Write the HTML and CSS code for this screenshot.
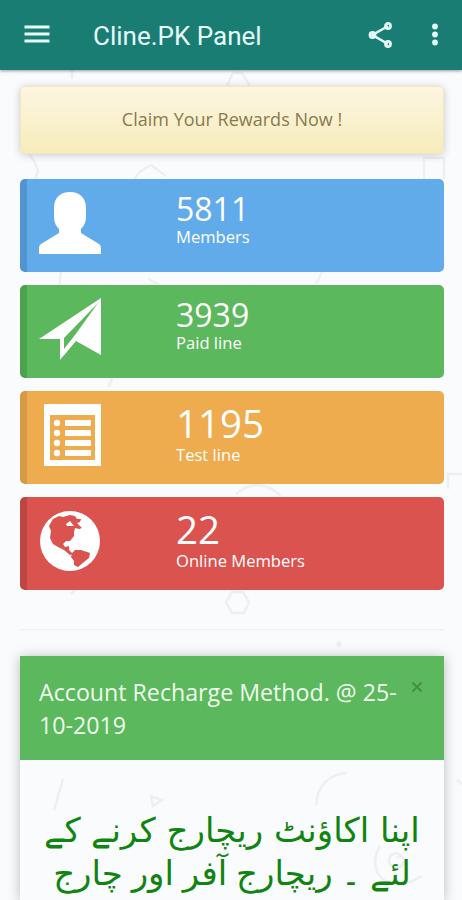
FILE: index.html
```html
<!DOCTYPE html>
<html lang="en">
<head>
  <meta charset="UTF-8" />
  <meta name="viewport" content="width=device-width, initial-scale=1.0" />
  <title>Cline.PK Panel</title>
  <link rel="stylesheet" href="styles.css">
</head>
<body>
  <svg class="doodles" width="462" height="900" viewBox="0 0 462 900">
    <path d="M72 70v9M227 86l6-13h9l8 13M29 155c5 4 7 9 9 16l-3 9M135 179q2-7 16-14l15 11M424 179v-21h20v21M61 272l-2 14M322 272l-6 12M148 279l12 6M112 378l-3 9M448 489v-15h14M236 494q22-19 45 2" />
    <path d="M232 592h11l6 10-5 11h-12l-6-11zM71 594l4-4" />
    <circle cx="339" cy="644" r="1.5" />
    <path d="M63 779l-9 31M151 796l11 4-9 6zM316 805c1-19 13-31 31-32M401 857c-3-7-12-3-12 4s10 9 14 3-2-10-6-6M380 846c-12 22 1 38 17 38 11 0 17-3 24-8M457 780l5 4M235 884l2-1" />
  </svg>

  <header class="topbar">
    <svg class="menu-icon" width="26" height="20" viewBox="0 0 26 20">
      <path d="M.5 3h25M.5 10h25M.5 17h25" />
    </svg>
    <h1>Cline.PK Panel</h1>
    <svg class="share-icon" width="26" height="28" viewBox="0 0 26 28">
      <path d="M20 5L4.500 14 20 23" />
      <circle cx="20" cy="5" r="2.600" />
      <circle cx="4.500" cy="14" r="2.600" />
      <circle cx="20" cy="23" r="2.600" />
    </svg>
    <svg class="more-icon" width="8" height="24" viewBox="0 0 8 24">
      <circle cx="4" cy="3.500" r="2.900" />
      <circle cx="4" cy="11.500" r="2.900" />
      <circle cx="4" cy="19.500" r="2.900" />
    </svg>
  </header>

  <main>
    <div class="rewards">Claim Your Rewards Now !</div>

    <div class="stats">
      <div class="stat blue">
        <svg class="stat-icon" width="64" height="64" viewBox="0 0 64 64">
          <path d="M32 1c10 0 16 6 16 16v8c0 6-2 10-5 13v4l18 11q2 1 2 4v6H1v-6q0-3 2-4l18-11v-4c-3-3-5-7-5-13v-8C16 7 22 1 32 1z" />
        </svg>
        <div class="stat-text">
          <div class="number">5811</div>
          <div class="label">Members</div>
        </div>
      </div>
      <div class="stat green">
        <svg class="stat-icon" width="64" height="64" viewBox="0 0 64 64">
          <path d="M63 1v57L38 44 22 63V42H1z" />
          <path class="cut" d="M60 6L26 41v11l11-14z" />
        </svg>
        <div class="stat-text">
          <div class="number">3939</div>
          <div class="label">Paid line</div>
        </div>
      </div>
      <div class="stat orange">
        <svg class="stat-icon" width="64" height="64" viewBox="0 0 64 64">
          <path d="M6 1h57v62H6z" />
          <path class="cut" d="M12 12h45v45H12z" />
          <path d="M28 17h24q1 0 1 1v4q0 1-1 1H28q-1 0-1-1v-4q0-1 1-1zM28 27h24q1 0 1 1v4q0 1-1 1H28q-1 0-1-1v-4q0-1 1-1zM28 37h24q1 0 1 1v4q0 1-1 1H28q-1 0-1-1v-4q0-1 1-1zM28 47h24q1 0 1 1v4q0 1-1 1H28q-1 0-1-1v-4q0-1 1-1z" />
          <circle cx="19" cy="20" r="3.200" />
          <circle cx="19" cy="30" r="3.200" />
          <circle cx="19" cy="40" r="3.200" />
          <circle cx="19" cy="50" r="3.200" />
        </svg>
        <div class="stat-text">
          <div class="number big">1195</div>
          <div class="label">Test line</div>
        </div>
      </div>
      <div class="stat red">
        <svg class="stat-icon" width="64" height="64" viewBox="0 0 64 64">
          <circle cx="32" cy="32" r="30" />
          <path class="cut" d="M15 10l6-3 4 1 7-2 5 1 2 3 4 0-1 3-3 1 5 5-3 1-4-1-1 4v4l-4 5-4 0-3 3 2 3 4-1v4l4 4-3 1-6-5-6-3-5-3-3-6 1-7-2-5z" />
          <path class="cut" d="M34 44l3-3h6l9 3-1 5-5 4-6 5-4-2 0-4-3-4z" />
          <path d="M28 15l4-3 4 5-7 0z" />
        </svg>
        <div class="stat-text">
          <div class="number big">22</div>
          <div class="label">Online Members</div>
        </div>
      </div>
    </div>

    <hr>

    <section class="notice">
      <div class="notice-head">
        <h2>Account Recharge Method. @ 25-10-2019</h2>
        <svg class="close-icon" width="12" height="12" viewBox="0 0 12 12">
          <path d="M1.500 1.500l9 9M10.500 1.500l-9 9" />
        </svg>
      </div>
      <div class="notice-body" lang="ur" dir="rtl">
        <div>اپنا اکاؤنٹ ریچارج کرنے کے</div>
        <div class="tight">لئے ۔ ریچارج آفر اور چارج</div>
      </div>
    </section>
  </main>
</body>
</html>
```
FILE: styles.css
```css
body {
  position: relative;
  height: 900px;
  margin: 0;
  overflow: hidden;
  background-color: #fafbfd;
  font-family: "Open Sans", sans-serif;
}
.doodles {
  position: absolute;
  top: 0;
  left: 0;
  z-index: -1;
  fill: none;
  stroke: #eeeff1;
  stroke-width: 2.5;
}
.topbar {
  display: flex;
  align-items: center;
  box-sizing: border-box;
  height: 70px;
  padding: 0 23px 0 24px;
  background-color: #1a7d74;
  box-shadow: 0 1px 3px rgba(0, 0, 0, 0.4);
}
.topbar h1 {
  flex: 1;
  margin: 1px 0 0 43px;
  color: #e6fbf8;
  font-family: Roboto, sans-serif;
  font-size: 26px;
  font-weight: 400;
}
.topbar svg {
  fill: none;
  stroke: #e6fbf8;
  stroke-width: 2.6;
}
.topbar .menu-icon {
  margin-top: -2px;
  stroke-width: 3.2;
}
.share-icon {
  margin-right: 37px;
}
.topbar .more-icon {
  fill: #e6fbf8;
  stroke: none;
}
main {
  padding: 16px 18px 0 20px;
}
.rewards {
  box-sizing: border-box;
  height: 68px;
  border: 1px solid #f1e7bc;
  border-radius: 5px;
  background: linear-gradient(#fcf6e2, #f7ecba);
  box-shadow: 0 1px 9px rgba(0, 0, 0, 0.2);
  color: #8a7950;
  font-size: 18px;
  line-height: 65px;
  text-align: center;
}
.stats {
  display: grid;
  gap: 13px;
  margin-top: 25px;
}
.stat {
  display: flex;
  box-sizing: border-box;
  height: 93px;
  padding: 12px 0 0 11px;
  border-left: 7px solid;
  border-radius: 5px;
}
.blue {
  background-color: #62abea;
  border-color: #5194d0;
}
.green {
  background-color: #5cb85c;
  border-color: #4da04d;
}
.orange {
  background-color: #eeac4e;
  border-color: #d69a45;
}
.red {
  background-color: #da534f;
  border-color: #bd4643;
}
.stat-icon {
  fill: #fff;
}
.green .cut {
  fill: #5cb85c;
}
.orange .cut {
  fill: #eeac4e;
}
.red .cut {
  fill: #da534f;
}
.stat-text {
  margin-left: 74px;
  color: #fff;
}
.number {
  font-size: 32px;
  line-height: 35px;
}
.number.big {
  font-size: 38.5px;
  line-height: 41px;
}
.label {
  font-size: 16.6px;
  line-height: 21px;
}
hr {
  margin: 39px 0 0;
  border: 0;
  border-top: 1px solid #eeeff1;
}
.notice {
  height: 244px;
  margin-top: 26px;
  box-shadow: 0 1px 12px rgba(0, 0, 0, 0.26);
}
.notice-head {
  display: flex;
  box-sizing: border-box;
  height: 104px;
  padding: 20px 21px 0 19px;
  background-color: #5cb85c;
}
.notice-head h2 {
  flex: 1;
  margin: 0;
  color: #effbef;
  font-size: 23.2px;
  font-weight: 400;
  line-height: 33px;
}
.close-icon {
  margin-top: 5px;
  fill: none;
  stroke: #468c47;
  stroke-width: 1.8;
}
.notice-body {
  padding-top: 49px;
  color: #108410;
  font-family: "DejaVu Sans", sans-serif;
  font-size: 34px;
  line-height: 43px;
  text-align: center;
  white-space: nowrap;
}
.tight {
  word-spacing: -2px;
}
```
